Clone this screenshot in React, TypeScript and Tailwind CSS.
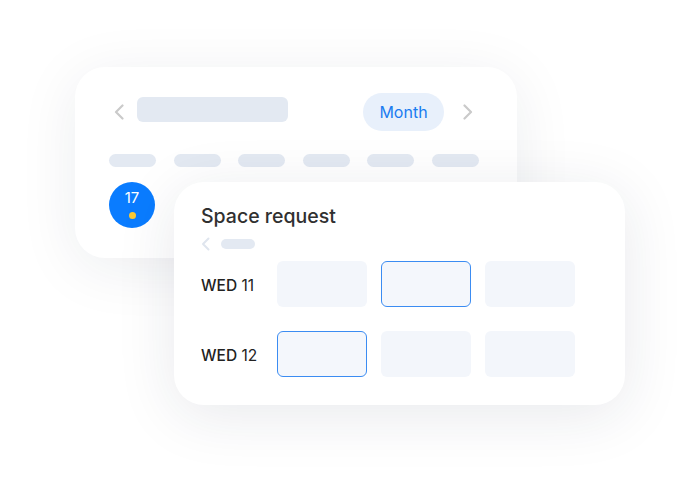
// Calendar illustration: a month card behind a "Space request" card.

const weekPills = [0, 1, 2, 3, 4, 5];

function Chevron({ dir, className }: { dir: "left" | "right"; className: string }) {
  return (
    <svg viewBox="0 0 12 16" fill="none" className={className} aria-hidden>
      <path
        d={dir === "left" ? "M9.5 1.5 L3 8 L9.5 14.5" : "M2.5 1.5 L9 8 L2.5 14.5"}
        stroke="currentColor"
        strokeWidth="2.2"
        strokeLinecap="round"
        strokeLinejoin="round"
      />
    </svg>
  );
}

function Slot({ selected = false }: { selected?: boolean }) {
  return (
    <div
      className={
        selected
          ? "h-[46px] w-[90px] rounded-[6px] border-[1.5px] border-[#3b8cf2] bg-[#f4f7fc]"
          : "h-[46px] w-[90px] rounded-[6px] bg-[#f3f6fb]"
      }
    />
  );
}

function DayRow({ day, num, pick }: { day: string; num: string; pick: number }) {
  return (
    <div className="flex items-center">
      <span className="mt-[3px] w-[76px] text-[15.5px] text-[#222]">
        <span className="font-medium">{day}</span> {num}
      </span>
      <div className="flex gap-[14px]">
        {[0, 1, 2].map((i) => (
          <Slot key={i} selected={i === pick} />
        ))}
      </div>
    </div>
  );
}

export default function App() {
  return (
    <div
      className="relative h-[488px] w-[698px] overflow-hidden bg-white"
      style={{ fontFamily: "Inter, 'Noto Sans', sans-serif" }}
    >
      {/* Month card (behind) */}
      <div className="absolute left-[75px] top-[67px] h-[191px] w-[442px] rounded-[30px] bg-white shadow-[0_10px_60px_rgba(30,40,70,0.08)]">
        <div className="flex items-center pl-[38px] pr-[43px] pt-[26px]">
          <Chevron dir="left" className="h-[16px] w-[12px] text-[#cacaca]" />
          <div className="mb-[5px] ml-[12px] h-[25px] w-[151px] rounded-[6px] bg-[#e3e9f2]" />
          <div className="ml-auto flex h-[38px] w-[81px] items-center justify-center rounded-full bg-[#e8f0fb] text-[16px] text-[#1a7cf0]">
            Month
          </div>
          <Chevron dir="right" className="ml-[18px] h-[16px] w-[12px] text-[#cacaca]" />
        </div>
        <div className="mt-[23px] flex gap-[17.6px] pl-[34px]">
          {weekPills.map((i) => (
            <div key={i} className="h-[13px] w-[47px] rounded-full bg-[#e3e9f2]" />
          ))}
        </div>
        <div className="ml-[34px] mt-[15px] flex h-[46px] w-[46px] flex-col items-center rounded-full bg-[#0a7cff] pt-[7px]">
          <span className="text-[15px] leading-[17px] text-white">17</span>
          <span className="mt-[6px] h-[7px] w-[7px] rounded-full bg-[#fcc934]" />
        </div>
      </div>

      {/* Space request card (front) */}
      <div className="absolute left-[174px] top-[182px] h-[223px] w-[451px] rounded-[30px] bg-white pl-[27px] pt-[22px] shadow-[0_10px_60px_rgba(30,40,70,0.1)]">
        <div className="text-[19.5px] font-medium leading-[24px] text-[#303030]">Space request</div>
        <div className="mt-[9px] flex items-center">
          <svg viewBox="0 0 9 14" fill="none" className="h-[14px] w-[9px] text-[#dfe5ee]" aria-hidden>
            <path d="M7.5 1.5 L2 7 L7.5 12.5" stroke="currentColor" strokeWidth="2" strokeLinecap="round" strokeLinejoin="round" />
          </svg>
          <div className="ml-[11px] h-[10px] w-[34px] rounded-full bg-[#e3e9f2]" />
        </div>
        <div className="mt-[10px] flex flex-col gap-[24px]">
          <DayRow day="WED" num="11" pick={1} />
          <DayRow day="WED" num="12" pick={0} />
        </div>
      </div>
    </div>
  );
}
